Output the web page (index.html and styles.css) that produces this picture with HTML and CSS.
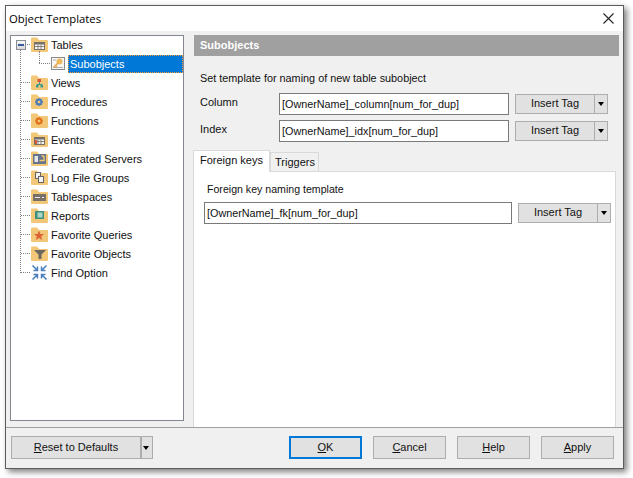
FILE: index.html
```html
<!DOCTYPE html>
<html lang="en">
<head>
    <meta charset="UTF-8">
    <title>Object Templates</title>
    <link rel="stylesheet" href="styles.css">
</head>
<body>
    <svg class="defs" width="0" height="0">
        <symbol id="folder" viewBox="0 0 17 15">
            <path d="M0 1.500Q0 .5 1 .5H6L8 3H16Q17 3 17 4V14Q17 15 16 15H1Q0 15 0 14Z" fill="#f2c778"/>
        </symbol>
        <symbol id="grid" viewBox="0 0 17 15">
            <rect x="3.500" y="5.500" width="10" height="7" fill="#f4f4f4" stroke="#77716a"/>
            <path d="M3 5.500H14V7.500H3Z" fill="#77716a"/>
            <path d="M7 7.500V12M10 7.500V12M4 9.500H13" stroke="#8a847c"/>
        </symbol>
    </svg>

    <div class="window">
        <div class="titlebar">
            <span>Object Templates</span>
            <svg class="close" width="11" height="11" viewBox="0 0 11 11"><path d="M.5 .5L10.500 10.500M10.500 .5L.5 10.500" stroke="#222" stroke-width="1.100"/></svg>
        </div>

        <div class="content">
            <div class="tree">
                <div class="row">
                    <span class="expander"></span>
                    <svg class="icon"><use href="#folder"/><use href="#grid"/></svg>
                    <span>Tables</span>
                </div>
                <div class="row child">
                    <svg class="icon-sub" viewBox="0 0 15 15">
                        <rect x=".5" y=".5" width="13" height="12" fill="#f6f6f6" stroke="#8a8a8a"/>
                        <path d="M2 10.500H12M2 3H5" stroke="#b0b0b0"/>
                        <circle cx="8.500" cy="4.500" r="3" fill="#efb95e"/>
                        <path d="M7 6L2.500 10.500M4.500 8.500L6 10" stroke="#e6a848" stroke-width="1.600"/>
                    </svg>
                    <span class="selected">Subobjects</span>
                </div>
                <div class="row">
                    <svg class="icon">
                        <use href="#folder"/>
                        <rect x="6.500" y="4" width="3.500" height="3" fill="#d9573c"/>
                        <path d="M8.500 7V9.500M6 11V9.500H11V11" stroke="#3c9a8c" fill="none"/>
                        <rect x="5" y="10" width="2.500" height="2.500" fill="#3c9a8c"/>
                        <rect x="9.500" y="10" width="2.500" height="2.500" fill="#3c9a8c"/>
                    </svg>
                    <span>Views</span>
                </div>
                <div class="row">
                    <svg class="icon">
                        <use href="#folder"/>
                        <circle cx="8" cy="8" r="2.500" fill="none" stroke="#4f7db8" stroke-width="2"/>
                        <path d="M8 4V12M4 8H12M5.200 5.200L10.800 10.800M10.800 5.200L5.200 10.800" stroke="#4f7db8" stroke-width="1.300"/>
                        <circle cx="8" cy="8" r="1.300" fill="#f2c778"/>
                    </svg>
                    <span>Procedures</span>
                </div>
                <div class="row">
                    <svg class="icon">
                        <use href="#folder"/>
                        <circle cx="8" cy="8" r="2.500" fill="none" stroke="#e2761f" stroke-width="2"/>
                        <path d="M8 4V12M4 8H12M5.200 5.200L10.800 10.800M10.800 5.200L5.200 10.800" stroke="#e2761f" stroke-width="1.300"/>
                        <circle cx="8" cy="8" r="1.300" fill="#f2c778"/>
                    </svg>
                    <span>Functions</span>
                </div>
                <div class="row">
                    <svg class="icon">
                        <use href="#folder"/><use href="#grid"/>
                        <rect x="4" y="8" width="2" height="4" fill="#d9573c"/>
                    </svg>
                    <span>Events</span>
                </div>
                <div class="row">
                    <svg class="icon">
                        <use href="#folder"/>
                        <rect x="2" y="3" width="13" height="10" fill="#66738c"/>
                        <rect x="3.500" y="5" width="3.500" height="6" fill="#e8e8e8"/>
                        <path d="M8.500 9.500H13V5M10.500 5H13" stroke="#f2c778" stroke-width="1.400" fill="none"/>
                    </svg>
                    <span>Federated Servers</span>
                </div>
                <div class="row">
                    <svg class="icon">
                        <use href="#folder"/>
                        <rect x="4.500" y="2.500" width="5" height="6" fill="#f2f2f2" stroke="#666"/>
                        <rect x="7.500" y="6.500" width="5" height="6" fill="#f2f2f2" stroke="#666"/>
                    </svg>
                    <span>Log File Groups</span>
                </div>
                <div class="row">
                    <svg class="icon">
                        <use href="#folder"/>
                        <rect x="2" y="5" width="13" height="7" fill="#77716a"/>
                        <path d="M4 8.500H9" stroke="#e8e8e8"/>
                        <rect x="11" y="8" width="2" height="1" fill="#e8e8e8"/>
                    </svg>
                    <span>Tablespaces</span>
                </div>
                <div class="row">
                    <svg class="icon">
                        <use href="#folder"/>
                        <rect x="4" y="3" width="9" height="8" fill="#3f8f7c"/>
                        <rect x="6.500" y="4.500" width="5" height="5" fill="#a9d6c6"/>
                    </svg>
                    <span>Reports</span>
                </div>
                <div class="row">
                    <svg class="icon">
                        <use href="#folder"/>
                        <path d="M8 3.500L9.400 7H13L10.200 9.400L11.200 13L8 11L4.800 13L5.800 9.400L3 7H6.600Z" fill="#dc6238"/>
                    </svg>
                    <span>Favorite Queries</span>
                </div>
                <div class="row">
                    <svg class="icon">
                        <use href="#folder"/>
                        <path d="M3 4H15L10.500 8.500V13H7.500V8.500Z" fill="#6c675f"/>
                    </svg>
                    <span>Favorite Objects</span>
                </div>
                <div class="row">
                    <svg class="icon" viewBox="0 0 17 15">
                        <path d="M1.500 .5L6 5M6.500 1.500V5.500H2.500M15.500 .5L11 5M10.500 1.500V5.500H14.500M1.500 14.500L6 10M6.500 13.500V9.500H2.500M15.500 14.500L11 10M10.500 13.500V9.500H14.500" fill="none" stroke="#4a80bd" stroke-width="1.500"/>
                    </svg>
                    <span>Find Option</span>
                </div>
            </div>

            <div class="main">
                <div class="header">Subobjects</div>
                <p class="intro">Set template for naming of new table subobject</p>
                <div class="field">
                    <label>Column</label>
                    <input type="text" value="[OwnerName]_column[num_for_dup]">
                    <button class="tag">Insert Tag</button><button class="arrow"></button>
                </div>
                <div class="field">
                    <label>Index</label>
                    <input type="text" value="[OwnerName]_idx[num_for_dup]">
                    <button class="tag">Insert Tag</button><button class="arrow"></button>
                </div>

                <div class="tabs">
                    <span class="tab active">Foreign keys</span>
                    <span class="tab">Triggers</span>
                </div>
                <div class="page">
                    <p class="page-label">Foreign key naming template</p>
                    <div class="field inner">
                        <input type="text" value="[OwnerName]_fk[num_for_dup]">
                        <button class="tag">Insert Tag</button><button class="arrow"></button>
                    </div>
                </div>
            </div>
        </div>

        <div class="footer">
            <button class="btn reset"><u>R</u>eset to Defaults</button><button class="arrow big"></button>
            <span class="spacer"></span>
            <button class="btn default"><u>O</u>K</button>
            <button class="btn"><u>C</u>ancel</button>
            <button class="btn"><u>H</u>elp</button>
            <button class="btn"><u>A</u>pply</button>
        </div>
    </div>
</body>
</html>
```

FILE: styles.css
```css
* {
    box-sizing: border-box;
}
body {
    margin: 0;
    height: 478px;
    overflow: hidden;
    background-color: #fff;
    font-family: "Liberation Sans", Arial, sans-serif;
    font-size: 11px;
    color: #111;
}
p {
    margin: 0;
}
.defs {
    position: absolute;
}
.window {
    display: flex;
    flex-direction: column;
    width: 619px;
    height: 464px;
    margin: 5px 0 0 5px;
    background-color: #f0f0f0;
    border: 1px solid #5c5c5c;
    box-shadow: 3px 3px 6px rgba(0, 0, 0, 0.5);
}
.titlebar {
    display: flex;
    justify-content: space-between;
    align-items: center;
    height: 25px;
    padding: 0 9px 0 3px;
    background-color: #fff;
    font-family: "Open Sans", sans-serif;
    font-size: 11.3px;
    color: #000;
}
.content {
    display: flex;
    height: 396px;
    padding: 4px 4px 0 4px;
}

/* Arbol de la izquierda */
.tree {
    position: relative;
    flex: none;
    width: 174px;
    height: 386px;
    background-color: #fff;
    border: 1px solid #828790;
}
.tree::before {
    content: "";
    position: absolute;
    left: 9px;
    top: 13px;
    height: 224px;
    border-left: 1px dotted #808080;
}
.row {
    position: relative;
    display: flex;
    align-items: center;
    height: 19px;
    padding-left: 20px;
    white-space: nowrap;
}
.row:first-child {
    margin-top: -1px;
}
.row::before {
    content: "";
    position: absolute;
    left: 10px;
    top: 9px;
    width: 9px;
    border-top: 1px dotted #808080;
}
.icon {
    flex: none;
    width: 17px;
    height: 15px;
    margin-right: 3px;
}
.expander {
    position: absolute;
    z-index: 1;
    left: 5px;
    top: 5px;
    width: 10px;
    height: 10px;
    background: linear-gradient(#f8f8f8, #d8d8d8);
    border: 1px solid #8a8e96;
}
.expander::after {
    content: "";
    position: absolute;
    left: 1px;
    top: 3px;
    width: 6px;
    height: 2px;
    background-color: #3a5a98;
}
.child {
    padding-left: 40px;
}
.child::before {
    left: 28px;
    width: 11px;
}
.child::after {
    content: "";
    position: absolute;
    left: 28px;
    top: -3px;
    height: 12px;
    border-left: 1px dotted #808080;
}
.icon-sub {
    flex: none;
    width: 15px;
    height: 15px;
    margin: 2px 2px 0 0;
}
.selected {
    flex: 1;
    align-self: flex-end;
    height: 18px;
    padding-left: 1px;
    line-height: 16px;
    color: #fff;
    background-color: #0078d7;
    border: 1px dotted #f39a3c;
}

/* Panel derecho */
.main {
    flex: none;
    width: 429px;
    height: 392px;
    margin-left: 5px;
}
.header {
    width: 425px;
    height: 21px;
    margin-left: 5px;
    padding-left: 6px;
    line-height: 20px;
    font-weight: bold;
    color: #fff;
    background-color: #a0a0a0;
}
.intro {
    height: 14px;
    margin: 15px 0 0 11px;
    font-size: 10.85px;
    line-height: 14px;
}
.field {
    display: flex;
    align-items: center;
    height: 22px;
    margin: 8px 0 5px 11px;
}
.field + .field {
    margin-top: 5px;
}
.field label {
    width: 79px;
    margin-top: -4px;
}
.field input {
    width: 230px;
    height: 22px;
    margin-right: 6px;
    padding: 0 2px;
    font: inherit;
    font-size: 10.8px;
    color: #111;
    background-color: #fff;
    border: 1px solid #7a7a7a;
    border-radius: 0;
    outline: none;
}
button {
    padding: 0;
    font: inherit;
    color: #111;
    background-color: #e1e1e1;
    border: 1px solid #adadad;
    border-radius: 0;
}
.tag {
    width: 80px;
    height: 20px;
    padding-bottom: 2px;
}
.arrow {
    position: relative;
    width: 13px;
    height: 20px;
    border-left: none;
}
.arrow::after {
    content: "";
    position: absolute;
    left: 3px;
    top: 7px;
    border: 3px solid transparent;
    border-top: 4px solid #000;
    border-bottom: none;
}
.tabs {
    display: flex;
    align-items: flex-end;
    height: 21px;
    margin: 8px 0 0 4px;
}
.tab {
    height: 19px;
    padding: 0 3px 0 4px;
    line-height: 19px;
    white-space: nowrap;
    background-color: #f0f0f0;
    border: 1px solid #d9d9d9;
    border-bottom: none;
}
.tab.active {
    position: relative;
    z-index: 1;
    width: 77px;
    height: 22px;
    margin-bottom: -1px;
    padding: 0 6px;
    line-height: 18px;
    background-color: #fff;
}
.page {
    width: 423px;
    height: 257px;
    margin-left: 4px;
    padding: 10px 4px 0 10px;
    background-color: #fff;
    border: 1px solid #d9d9d9;
    border-bottom: none;
}
.page-label {
    height: 14px;
    margin: 0 0 6px 3px;
    font-size: 10.6px;
    line-height: 14px;
}
.inner {
    margin: 0;
}
.inner input {
    width: 308px;
}
.footer {
    display: flex;
    align-items: center;
    gap: 11px;
    flex: 1;
    padding: 0 9px 2px 5px;
    border-top: 1px solid #a0a0a0;
}
.btn {
    width: 73px;
    height: 23px;
}
.reset {
    width: 130px;
    margin-right: -11px;
}
.arrow.big {
    width: 12px;
    height: 23px;
    border-left: 1px solid #adadad;
}
.arrow.big::after {
    left: 1px;
    top: 9px;
}
.spacer {
    flex: 1;
}
.default {
    border: 2px solid #0078d7;
}
```
